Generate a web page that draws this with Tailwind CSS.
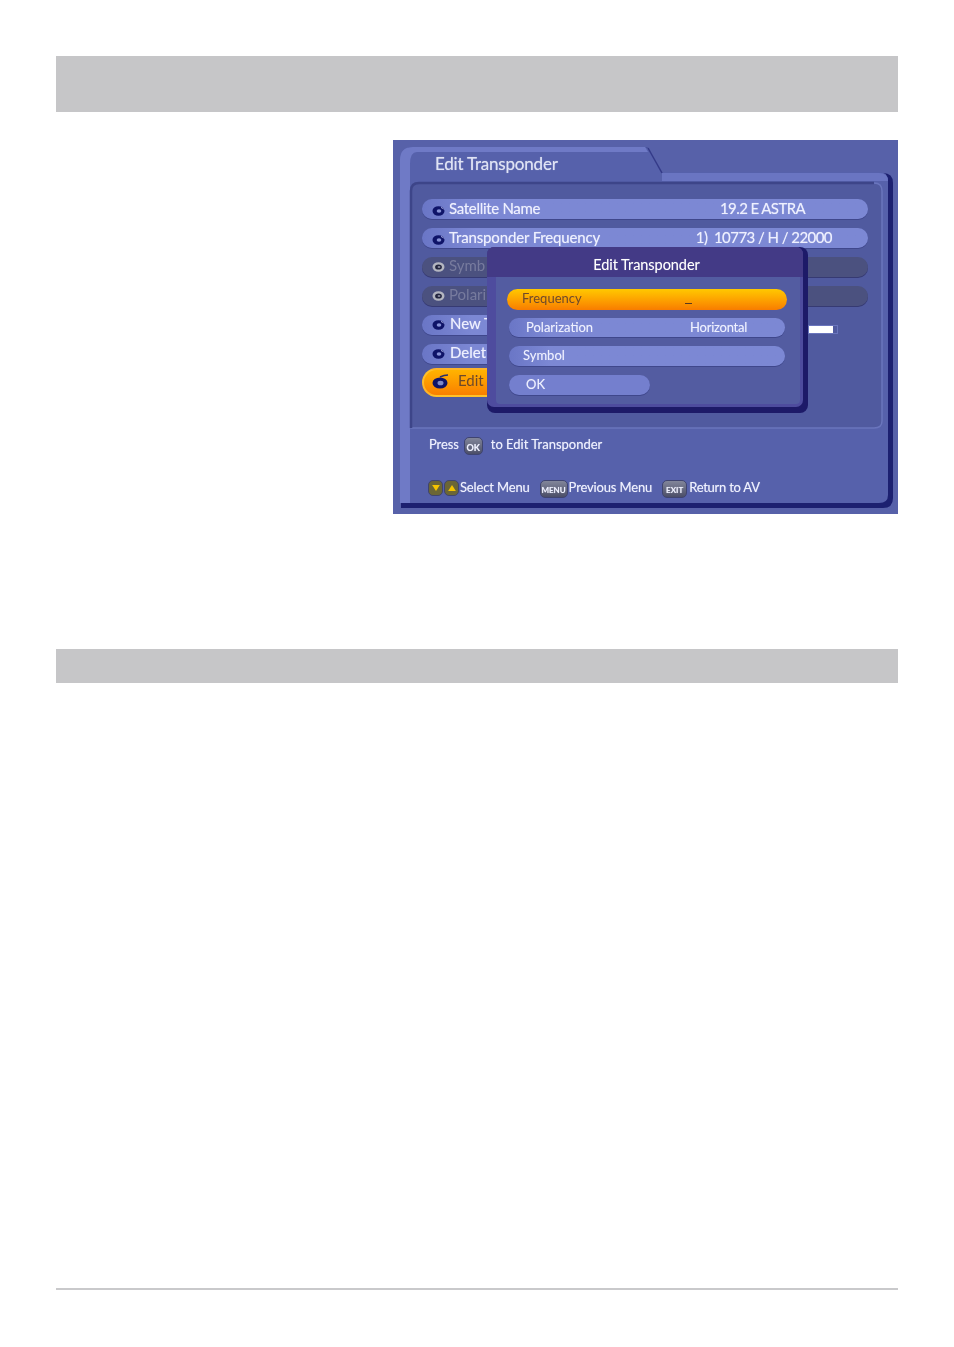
<!DOCTYPE html>
<html lang="en">
<head>
  <meta charset="UTF-8" />
  <title>Edit Transponder</title>
  <script src="https://cdn.jsdelivr.net/npm/@tailwindcss/browser@4"></script>
</head>
<body class="bg-white h-[1347px] overflow-hidden font-['Lato','Liberation_Sans',sans-serif]">
  <div class="mx-[56px] pt-[56px]">
    <div class="h-[56px] bg-[#c6c6c8]"></div>

    <div class="mt-[28px] flex justify-end">
      <!-- tv screen -->
      <div class="relative w-[505px] h-[374px] bg-[#5761a9] overflow-hidden text-[#eef0ff] [filter:blur(0.5px)] [text-shadow:0_0_1px_rgba(255,255,255,0.55)]">
        <!-- menu frame -->
        <svg class="absolute inset-0" width="505" height="374" viewBox="0 0 505 374">
          <path d="M8 368 V22 Q8 7 20 7 H254 L269 33 H490 Q500 33 500 43 V358 Q500 368 490 368 Z" fill="#1c2070" />
          <path d="M7 363 V20 Q7 7 20 7 H252 Q256 7 258 12 L269 32 H486 Q495 32 495 41 V355 Q495 363 486 363 Z" fill="#5661ab" />
          <path d="M7 363 V20 Q7 7 20 7 H252 L255 12 H24 Q17 12 17 24 V363 Z" fill="#6f7ac6" />
          <path d="M269 33 H486 Q495 33 495 41 H269 Z" fill="#6a75c2" />
          <path d="M255 8 L269 33" fill="none" stroke="#343a88" stroke-width="1.5" />
          <path d="M18 288 V51 Q18 43 26 43 H481 Q489 43 489 51 V281 Q489 288 481 288 Z" fill="#505a9f" stroke="#6a75bd" stroke-width="1.5" />
          <path d="M18 288 V51 Q18 43 26 43 H481" fill="none" stroke="#3d4589" stroke-width="2.5" />
        </svg>

        <!-- menu rows -->
        <div class="absolute left-[29px] top-[59px] w-[446px] flex flex-col gap-[9px] text-[15px] leading-[20px]">
          <div class="h-[20px] rounded-full bg-gradient-to-r from-[#6a76c6] via-[#7c88d4] via-[12%] to-[#7c88d4] shadow-[0_1px_0_#3f478c] flex items-center pl-[10px]">
            <svg class="shrink-0 mt-[3px]" width="13" height="10" viewBox="0 0 13 10"><ellipse cx="6.5" cy="5" rx="6" ry="4.8" fill="#0f1468" /><ellipse cx="7" cy="5" rx="2.3" ry="1.8" fill="#8792d6" /><path d="M9 1.5 Q11 2 12 3.5" fill="none" stroke="#aab2e6" stroke-width="1" /></svg>
            <span class="ml-[4px] -mt-[2px] tracking-[-0.3px]">Satellite Name</span>
            <span class="ml-auto mr-[63px] -mt-[2px] tracking-[-0.6px]">19.2 E ASTRA</span>
          </div>
          <div class="h-[20px] rounded-full bg-gradient-to-r from-[#6a76c6] via-[#7c88d4] via-[12%] to-[#7c88d4] shadow-[0_1px_0_#3f478c] flex items-center pl-[10px]">
            <svg class="shrink-0 mt-[3px]" width="13" height="10" viewBox="0 0 13 10"><ellipse cx="6.5" cy="5" rx="6" ry="4.8" fill="#0f1468" /><ellipse cx="7" cy="5" rx="2.3" ry="1.8" fill="#8792d6" /><path d="M9 1.5 Q11 2 12 3.5" fill="none" stroke="#aab2e6" stroke-width="1" /></svg>
            <span class="ml-[4px] -mt-[2px] tracking-[-0.15px]">Transponder Frequency</span>
            <span class="ml-auto mr-[36px] -mt-[2px] tracking-[-0.55px] whitespace-pre">1)  10773 / H / 22000</span>
          </div>
          <div class="h-[20px] rounded-full bg-[#4b517f] shadow-[0_1px_0_#363a73] flex items-center pl-[10px]">
            <svg class="shrink-0 -mt-[1px]" width="13" height="10" viewBox="0 0 13 10"><ellipse cx="6.5" cy="5" rx="6" ry="4.8" fill="#b4b6c0" /><ellipse cx="6.5" cy="5" rx="3.4" ry="2.6" fill="#24263f" /><ellipse cx="7" cy="5" rx="1.4" ry="1" fill="#8a8ca0" /></svg>
            <span class="ml-[4px] -mt-[4px] text-[#777b9e] [text-shadow:none]">Symb</span>
          </div>
          <div class="h-[20px] rounded-full bg-[#4b517f] shadow-[0_1px_0_#363a73] flex items-center pl-[10px]">
            <svg class="shrink-0 -mt-[1px]" width="13" height="10" viewBox="0 0 13 10"><ellipse cx="6.5" cy="5" rx="6" ry="4.8" fill="#b4b6c0" /><ellipse cx="6.5" cy="5" rx="3.4" ry="2.6" fill="#24263f" /><ellipse cx="7" cy="5" rx="1.4" ry="1" fill="#8a8ca0" /></svg>
            <span class="ml-[4px] -mt-[4px] text-[#777b9e] [text-shadow:none]">Polari</span>
          </div>
          <div class="flex items-center">
            <div class="w-[200px] h-[20px] rounded-full bg-gradient-to-r from-[#6a76c6] via-[#7c88d4] via-[25%] to-[#7c88d4] shadow-[0_1px_0_#3f478c] flex items-center pl-[10px]">
              <svg class="shrink-0" width="13" height="10" viewBox="0 0 13 10"><ellipse cx="6.5" cy="5" rx="6" ry="4.8" fill="#0f1468" /><ellipse cx="7" cy="5" rx="2.3" ry="1.8" fill="#8792d6" /><path d="M9 1.5 Q11 2 12 3.5" fill="none" stroke="#aab2e6" stroke-width="1" /></svg>
              <span class="ml-[5px] -mt-[4px]">New T</span>
            </div>
            <div class="ml-[186px] w-[30px] h-[9px] border border-[#6a75bd] mt-[8px]">
              <div class="w-[24px] h-full bg-white"></div>
            </div>
          </div>
          <div class="w-[200px] h-[20px] rounded-full bg-gradient-to-r from-[#6a76c6] via-[#7c88d4] via-[25%] to-[#7c88d4] shadow-[0_1px_0_#3f478c] flex items-center pl-[10px]">
            <svg class="shrink-0 -mt-[1px]" width="13" height="10" viewBox="0 0 13 10"><ellipse cx="6.5" cy="5" rx="6" ry="4.8" fill="#0f1468" /><ellipse cx="7" cy="5" rx="2.3" ry="1.8" fill="#8792d6" /><path d="M9 1.5 Q11 2 12 3.5" fill="none" stroke="#aab2e6" stroke-width="1" /></svg>
            <span class="ml-[5px] -mt-[4px]">Delet</span>
          </div>
          <div class="w-[200px] h-[29px] -mt-[5px] rounded-full bg-gradient-to-b from-[#ffb300] to-[#f97f00] border-2 border-[#ffc93a]/70 flex items-center pl-[8px] text-[#6e4a2a] [text-shadow:none]">
            <svg class="shrink-0 -mt-[3px]" width="17" height="15" viewBox="0 0 17 15"><ellipse cx="8" cy="9" rx="7.5" ry="5.5" fill="#0f1468" /><ellipse cx="8.5" cy="9" rx="3" ry="2.3" fill="#7f8ac8" /><path d="M8 3 Q12 1 16 1" fill="none" stroke="#2b2f6a" stroke-width="1.6" /></svg>
            <span class="ml-[9px] -mt-[6px]">Edit</span>
          </div>
        </div>

        <!-- hints -->
        <div class="absolute left-[36px] top-[293px] flex items-center text-[13px] leading-[20px] whitespace-nowrap">
          <span class="tracking-[-0.1px]">Press</span>
          <span class="ml-[5px] mt-[4px] w-[19px] h-[18px] rounded-[5px] bg-gradient-to-b from-[#82869a] to-[#4b4e68] border border-[#3f4470] text-[9px] font-bold text-center leading-[19px]">OK</span>
          <span class="ml-[8px]">to Edit Transponder</span>
        </div>
        <div class="absolute left-[35px] top-[336px] flex items-center text-[13px] leading-[20px] tracking-[-0.15px] whitespace-nowrap">
          <span class="w-[15px] h-[16px] mt-[2px] rounded-[5px] bg-[#6b6636] border border-[#3f4470] flex items-center justify-center">
            <svg width="8" height="6" viewBox="0 0 9 7"><path d="M0 0 H9 L4.5 7 Z" fill="#f5c400" /></svg>
          </span>
          <span class="ml-[1px] w-[15px] h-[16px] mt-[2px] rounded-[5px] bg-[#6b6636] border border-[#3f4470] flex items-center justify-center">
            <svg width="8" height="6" viewBox="0 0 9 7"><path d="M0 7 H9 L4.5 0 Z" fill="#f5c400" /></svg>
          </span>
          <span class="ml-[1px]">Select Menu</span>
          <span class="ml-[10px] w-[28px] h-[18px] mt-[4px] rounded-[5px] bg-gradient-to-b from-[#82869a] to-[#4b4e68] border border-[#3f4470] text-[8px] font-bold text-center leading-[19px] tracking-normal">MENU</span>
          <span class="ml-[1px]">Previous Menu</span>
          <span class="ml-[10px] w-[25px] h-[18px] mt-[4px] rounded-[5px] bg-gradient-to-b from-[#82869a] to-[#4b4e68] border border-[#3f4470] text-[8px] font-bold text-center leading-[19px] tracking-normal">EXIT</span>
          <span class="ml-[2px] tracking-[-0.25px]">Return to AV</span>
        </div>

        <!-- edit dialog -->
        <div class="absolute left-[94px] top-[107px] w-[321px] h-[166px] rounded-[8px] bg-[#1d1a68] pr-[5px] pb-[6px] [text-shadow:0_0_1px_rgba(255,255,255,0.4)]">
          <div class="h-full rounded-[7px] bg-[#4e4c9e] overflow-hidden flex flex-col">
            <div class="h-[30px] bg-[#433a86] text-center text-[14.5px] leading-[36px] text-white pl-[3px] tracking-[-0.05px]">Edit Transponder</div>
            <div class="flex-1 ml-[9px] mr-[3px] mb-[3px] rounded-b-[4px] bg-[#535ca1] pt-[12px] text-[13px] leading-[20px]">
              <div class="h-[21px] w-[280px] ml-[11px] rounded-full bg-gradient-to-b from-[#ffc800] to-[#f87c00] flex items-center pl-[15px] text-[#6e4a2a] [text-shadow:none]">
                <span class="-mt-[4px]">Frequency</span>
                <span class="ml-[103px] mt-[8px] w-[7px] h-[1px] bg-[#5a3a20]"></span>
              </div>
              <div class="mt-[8px] h-[19px] w-[276px] ml-[13px] rounded-full bg-gradient-to-r from-[#6a76c6] via-[#7c88d4] via-[15%] to-[#7c88d4] shadow-[0_1px_0_#3f478c] flex items-center pl-[17px]">
                <span class="-mt-[2px]">Polarization</span>
                <span class="ml-[97px] -mt-[2px] tracking-[-0.25px]">Horizontal</span>
              </div>
              <div class="mt-[9px] h-[20px] w-[276px] ml-[13px] rounded-full bg-gradient-to-r from-[#6a76c6] via-[#7c88d4] via-[15%] to-[#7c88d4] shadow-[0_1px_0_#3f478c] flex items-center pl-[14px]"><span class="-mt-[2px]">Symbol</span></div>
              <div class="mt-[9px] h-[20px] w-[141px] ml-[13px] rounded-full bg-[#747fce] shadow-[0_1px_0_#3f478c] flex items-center pl-[17px]"><span class="-mt-[2px]">OK</span></div>
            </div>
          </div>
        </div>

        <!-- menu title -->
        <div class="absolute left-[42px] top-[12px] text-[17px] leading-[24px] text-[#dfe3f5] tracking-[-0.2px]">Edit Transponder</div>
      </div>
    </div>

    <div class="mt-[135px] h-[34px] bg-[#c6c6c8]"></div>
    <div class="mt-[605px] h-[2px] bg-[#c9c9cb]"></div>
  </div>
</body>
</html>
